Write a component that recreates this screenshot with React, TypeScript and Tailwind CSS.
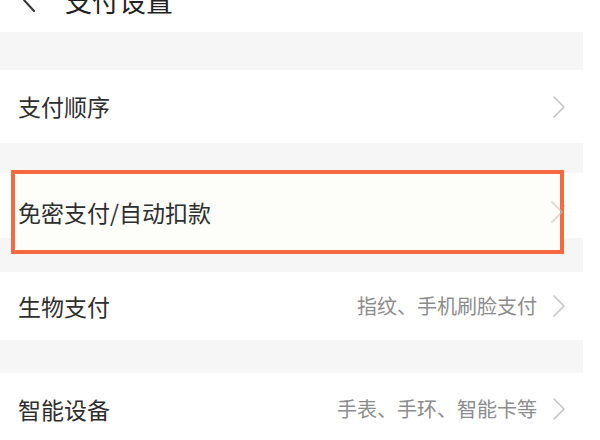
import React from "react";

const Chevron = ({ className = "" }: { className?: string }) => (
  <svg width="14" height="24" viewBox="0 0 14 24" className={className} fill="none">
    <path d="M2 2 L12 12 L2 22" stroke="#c4c4c4" strokeWidth="1.6" strokeLinecap="round" strokeLinejoin="round" />
  </svg>
);

const Row = ({ label, value, h }: { label?: string; value?: string; h: string }) => (
  <div className={`flex items-center bg-white pl-[18px] pr-[17px] ${h}`}>
    {label && <span className="text-[23px] text-[#2e2e2e] leading-none">{label}</span>}
    <div className="ml-auto flex items-center gap-[15px]">
      {value && <span className="text-[20px] text-[#8c8c8c] leading-none">{value}</span>}
      <Chevron />
    </div>
  </div>
);

export default function App() {
  return (
    <div
      className="w-[600px] h-[440px] bg-white overflow-hidden"
      style={{ fontFamily: '"Noto Sans CJK SC", "Noto Sans", sans-serif' }}
    >
      <div className="w-[583px] flex flex-col">
        <div className="h-[32px] bg-white overflow-hidden">
          <div className="-mt-[16px] h-[32px] flex items-center pl-[22px]">
            <svg width="14" height="26" viewBox="0 0 14 26" fill="none">
              <path d="M12 2 L2 13 L12 24" stroke="#333" strokeWidth="2" strokeLinecap="round" strokeLinejoin="round" />
            </svg>
            <span className="ml-[29px] text-[27px] text-[#222] leading-none">支付设置</span>
          </div>
        </div>
        <div className="h-[38px] bg-[#f6f6f6]" />
        <Row label="支付顺序" h="h-[73px]" />
        <div className="h-[30px] bg-[#f6f6f6]" />
        <div className="relative">
          <Row h="h-[65px]" />
          <div className="h-[34px] bg-[#f6f6f6]" />
          <div className="absolute left-[11px] top-[-3px] w-[553px] h-[84px] border-[4px] border-[#f26a3e] bg-[#fdfdf9] flex items-center pl-[3px]">
            <span className="text-[23px] text-[#2e2e2e] leading-none">免密支付/自动扣款</span>
            <div className="ml-auto mr-[-4px] opacity-70">
              <Chevron />
            </div>
          </div>
        </div>
        <Row label="生物支付" value="指纹、手机刷脸支付" h="h-[68px]" />
        <div className="h-[33px] bg-[#f6f6f6]" />
        <Row label="智能设备" value="手表、手环、智能卡等" h="h-[72px]" />
      </div>
    </div>
  );
}
